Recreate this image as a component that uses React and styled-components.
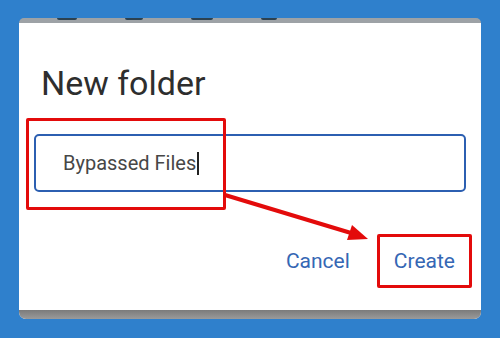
import React from "react";
import styled, { createGlobalStyle } from "styled-components";

const GlobalStyle = createGlobalStyle`
  html, body {
    margin: 0;
    padding: 0;
    background: #2f80cc;
  }
  body {
    font-family: Roboto, "Liberation Sans", Arial, sans-serif;
  }
`;

const Page = styled.div`
  width: 500px;
  height: 338px;
  box-sizing: border-box;
  padding: 18px 19px 19px;
  background: #2f80cc;
`;

const Frame = styled.div`
  height: 301px;
  display: flex;
  flex-direction: column;
  border-radius: 5px 5px 7px 7px;
  overflow: hidden;
  background: linear-gradient(#9da2a6 0 5px, #ffffff 5px);
`;

const TopBand = styled.div`
  height: 5px;
  flex: none;
  display: flex;
  align-items: flex-start;
  padding-left: 38px;
  gap: 48px;
`;

const Mark = styled.span`
  width: ${(p) => p.w}px;
  height: 2px;
  border-radius: 0 0 2px 2px;
  background: #2c4150;
`;

const Dialog = styled.div`
  position: relative;
  flex: 1;
  background: #ffffff;
  padding: 40px 9px 22px 22px;
  display: flex;
  flex-direction: column;
`;

const BottomBand = styled.div`
  height: 9px;
  flex: none;
  background: linear-gradient(#7b7b7b, #9a9a9a);
`;

const Title = styled.h2`
  margin: 0;
  font-size: 34px;
  line-height: 40px;
  font-weight: 400;
  color: #2e2e2e;
`;

const FieldWrap = styled.div`
  position: relative;
  margin: 31px 6px 0 -7px;
`;

const Field = styled.div`
  height: 58px;
  box-sizing: border-box;
  border: 2px solid #2c5fb1;
  border-radius: 5px;
  display: flex;
  align-items: center;
  padding-left: 27px;
  font-size: 20px;
  color: #474747;
`;

const Caret = styled.span`
  display: inline-block;
  width: 1.5px;
  height: 23px;
  margin-left: 1px;
  background: #222;
`;

const FieldHighlight = styled.div`
  position: absolute;
  left: -8px;
  top: -16px;
  width: 200px;
  height: 92px;
  box-sizing: border-box;
  border: 3px solid #e30b0b;
  border-radius: 2px;
  pointer-events: none;
`;

const Arrow = styled.svg`
  position: absolute;
  left: 201px;
  top: 167px;
  overflow: visible;
  pointer-events: none;
`;

const Actions = styled.div`
  margin-top: 42px;
  display: flex;
  justify-content: flex-end;
  gap: 10px;
`;

const Button = styled.button`
  height: 54px;
  box-sizing: border-box;
  padding: 0 14px;
  border: 3px solid ${(p) => (p.highlighted ? "#e30b0b" : "transparent")};
  border-radius: 2px;
  background: transparent;
  font-family: Roboto, "Liberation Sans", Arial, sans-serif;
  font-size: 21px;
  font-weight: 400;
  color: #3567b4;
  cursor: pointer;
`;

export default function App() {
  return (
    <>
      <GlobalStyle />
      <Page>
        <Frame>
          <TopBand>
            <Mark w={20} />
            <Mark w={18} />
            <Mark w={22} />
            <Mark w={16} />
          </TopBand>
          <Dialog>
            <Title>New folder</Title>
            <FieldWrap>
              <Field>
                Bypassed Files
                <Caret />
              </Field>
              <FieldHighlight />
            </FieldWrap>
            <Actions>
              <Button>Cancel</Button>
              <Button highlighted>Create</Button>
            </Actions>
            <Arrow width="155" height="52" viewBox="0 0 155 52">
              <line x1="5" y1="5" x2="131" y2="43" stroke="#e30b0b" strokeWidth="4" />
              <polygon points="148,49 127,50 132,35" fill="#e30b0b" />
            </Arrow>
          </Dialog>
          <BottomBand />
        </Frame>
      </Page>
    </>
  );
}
